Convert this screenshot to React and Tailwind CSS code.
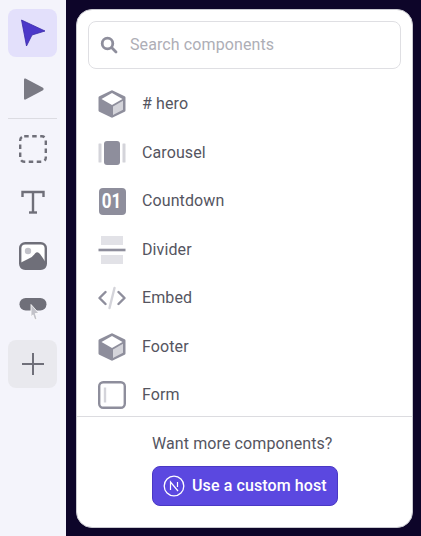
import React from "react";

const CubeIcon = () => (
  <svg width="28" height="28" viewBox="0 0 28 28">
    <path d="M14 1.800 L26 7.500 V20.500 L14 26.200 L2 20.500 V7.500 Z" fill="#8e8e9c" stroke="#8e8e9c" strokeWidth="3" strokeLinejoin="round" />
    <path d="M14 3 L24.500 9 L14 15 L3.500 9 Z" fill="#ffffff" />
    <path d="M15 16.500 L25 10.800 V19.800 L15 25 Z" fill="#d4d4da" />
  </svg>
);

const CarouselIcon = () => (
  <svg width="28" height="28" viewBox="0 0 28 28">
    <rect x="0.500" y="4.500" width="3" height="19" rx="0.500" fill="#d4d4da" />
    <rect x="24.500" y="4.500" width="3" height="19" rx="0.500" fill="#d4d4da" />
    <rect x="6" y="2" width="16" height="24" rx="3" fill="#8e8e9c" />
  </svg>
);

const CountdownIcon = () => (
  <div className="flex h-[27px] w-[27px] items-center justify-center rounded-[4px] bg-[#8e8e9c] text-[20px] font-bold text-white">
    <span className="inline-block scale-x-85">01</span>
  </div>
);

const DividerIcon = () => (
  <svg width="28" height="28" viewBox="0 0 28 28">
    <rect x="3" y="0" width="22" height="9" fill="#e2e2e7" />
    <rect x="0.500" y="12.700" width="27" height="2.600" fill="#8e8e9c" />
    <rect x="3" y="19" width="22" height="9" fill="#e2e2e7" />
  </svg>
);

const EmbedIcon = () => (
  <svg width="28" height="28" viewBox="0 0 28 28" fill="none" strokeWidth="2.400" strokeLinecap="round" strokeLinejoin="round">
    <path d="M7.500 8 L1.500 14 L7.500 20" stroke="#8e8e9c" />
    <path d="M20.500 8 L26.500 14 L20.500 20" stroke="#8e8e9c" />
    <path d="M16.500 4 L11.500 24" stroke="#d4d4da" />
  </svg>
);

const FormIcon = () => (
  <svg width="28" height="28" viewBox="0 0 28 28" fill="none">
    <rect x="1.200" y="1.200" width="25.600" height="25.600" rx="4" stroke="#8e8e9c" strokeWidth="2.400" />
    <path d="M7 6.500 V21.500" stroke="#d4d4da" strokeWidth="2.400" />
  </svg>
);

const items = [
  { name: "# hero", Icon: CubeIcon },
  { name: "Carousel", Icon: CarouselIcon },
  { name: "Countdown", Icon: CountdownIcon },
  { name: "Divider", Icon: DividerIcon },
  { name: "Embed", Icon: EmbedIcon },
  { name: "Footer", Icon: CubeIcon },
  { name: "Form", Icon: FormIcon },
];

const Sidebar = () => (
  <div className="flex w-[66px] shrink-0 flex-col items-start bg-[#f4f4fb] pl-2 pt-[9px]">
    {/* Select */}
    <div className="flex h-[48px] w-[49px] items-center justify-center rounded-[8px] bg-[#e3e0fb]">
      <svg width="28" height="30" viewBox="0 0 28 30">
        <path d="M2.500 2 L26 13 L13 17 L7.500 28 Z" fill="#4c38c9" stroke="#3a2aa8" strokeWidth="0.800" strokeLinejoin="round" />
      </svg>
    </div>
    {/* Play */}
    <div className="mt-[2px] flex h-[59px] w-[49px] items-center justify-center">
      <svg width="24" height="24" viewBox="0 0 24 24">
        <path d="M3 2.500 Q3 1 4.500 1.500 L22 10.800 Q23.500 12 22 13.200 L4.500 22.500 Q3 23 3 21.500 Z" fill="#7a7a84" />
      </svg>
    </div>
    <div className="h-[1px] w-[49px] bg-[#dcdce2]" />
    {/* Section */}
    <div className="mt-[6px] flex h-[48px] w-[49px] items-center justify-center">
      <svg width="28" height="28" viewBox="0 0 28 28" fill="none">
        <rect x="1.200" y="1.200" width="25.600" height="25.600" rx="4" stroke="#6f6f79" strokeWidth="2.400" strokeDasharray="4.500 3.500" />
      </svg>
    </div>
    {/* Text */}
    <div className="mt-[5px] flex h-[48px] w-[49px] items-center justify-center">
      <svg width="24" height="24" viewBox="0 0 24 24" fill="none" stroke="#6f6f79" strokeWidth="2.400">
        <path d="M1.500 7 V2 H22.500 V7" />
        <path d="M12 2 V22.500" />
        <path d="M8 22.500 H16" />
      </svg>
    </div>
    {/* Image */}
    <div className="mt-[6px] flex h-[48px] w-[49px] items-center justify-center">
      <svg width="28" height="28" viewBox="0 0 28 28">
        <rect x="1.200" y="1.200" width="25.600" height="25.600" rx="5" fill="#ffffff" stroke="#6f6f79" strokeWidth="2.400" />
        <circle cx="9" cy="9" r="3.200" fill="#c2c2c9" />
        <path d="M1 21 L9 17 Q13 16 16 11.500 Q18.500 9 21 12 Q24 16 27 21 V23 Q27 27 23 27 H5 Q1 27 1 23 Z" fill="#6f6f79" />
      </svg>
    </div>
    {/* Button */}
    <div className="mt-[6px] flex h-[48px] w-[49px] items-center justify-center">
      <svg width="28" height="26" viewBox="0 0 28 26">
        <rect x="0.500" y="1" width="27" height="12.500" rx="6.200" fill="#6f6f79" />
        <path d="M12 7.500 L20 16.500 L16.300 16.500 L18 22 L15.800 23 L14 17.800 L12 19.800 Z" fill="#c2c2c9" stroke="#ffffff" strokeWidth="0.800" />
      </svg>
    </div>
    {/* Add */}
    <div className="mt-[6px] flex h-[48px] w-[49px] items-center justify-center rounded-[8px] bg-[#e9e9ee]">
      <svg width="22" height="22" viewBox="0 0 22 22" stroke="#6f6f79" strokeWidth="2">
        <path d="M11 0 V22" />
        <path d="M0 11 H22" />
      </svg>
    </div>
  </div>
);

const App = () => {
  return (
    <div className="flex h-[536px] w-[421px] overflow-hidden bg-[#0d0529] font-['Roboto',sans-serif] tracking-[0.1px]">
      <Sidebar />
      <div className="flex-1 pb-2 pl-[10px] pr-2 pt-[9px]">
        <div className="flex h-[519px] flex-col overflow-hidden rounded-[16px] border border-[#c9c9d0] bg-white">
          <div className="px-[11px] pt-[11px]">
            <div className="flex h-[48px] items-center rounded-[8px] border-[1.500px] border-[#dfdfe3] pl-[11px]">
              <svg width="18" height="18" viewBox="0 0 18 18" fill="none" stroke="#8e8e9c" strokeWidth="2.800" strokeLinecap="round">
                <circle cx="7.500" cy="7.500" r="5.300" />
                <path d="M11.800 11.800 L16 16" />
              </svg>
              <span className="ml-[12px] text-[16px] text-[#aeaeb6]">Search components</span>
            </div>
          </div>
          <div className="mt-[11px] flex-1 overflow-hidden pl-[21px]">
            {items.map(({ name, Icon }) => (
              <div key={name} className="flex h-[48.500px] items-center">
                <div className="flex w-[28px] shrink-0 items-center justify-center">
                  <Icon />
                </div>
                <span className="ml-[16px] text-[16px] text-[#55555f]">{name}</span>
              </div>
            ))}
          </div>
          <div className="flex h-[111px] shrink-0 flex-col border-t border-[#dcdce0] pl-[75px]">
            <div className="mt-[17px] text-[16px] leading-[20px] text-[#55555f]">Want more components?</div>
            <div className="mt-[12px] flex h-[40px] w-[186px] items-center rounded-[8px] border border-[#4a38c4] bg-[#5b48e0] pl-[10px]">
              <svg width="22" height="22" viewBox="0 0 22 22" fill="none" stroke="#ffffff">
                <circle cx="11" cy="11" r="9.800" strokeWidth="1.300" />
                <path d="M7.500 15 V7 L15 16" strokeWidth="1.200" />
                <path d="M14.500 7 V12" strokeWidth="1.200" />
              </svg>
              <span className="ml-[7px] text-[16px] font-medium text-white">Use a custom host</span>
            </div>
          </div>
        </div>
      </div>
    </div>
  );
};

export default App;
